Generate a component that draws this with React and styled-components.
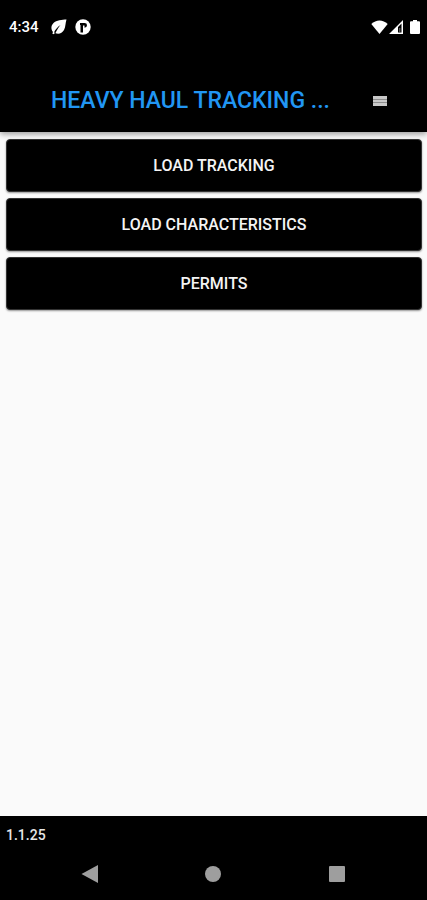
import React from 'react';
import styled, { createGlobalStyle } from 'styled-components';

const GlobalStyle = createGlobalStyle`
  * {
    box-sizing: border-box;
  }

  body {
    margin: 0;
    background: #fafafa;
    font-family: Roboto, sans-serif;
  }
`;

const Screen = styled.div`
  display: flex;
  flex-direction: column;
  min-height: 100vh;
`;

const Header = styled.header`
  background: #000000;
  box-shadow: 0 2px 6px rgba(0, 0, 0, 0.4);
`;

const StatusBar = styled.div`
  display: flex;
  align-items: center;
  justify-content: space-between;
  height: 54px;
  padding: 0 7px 0 9px;
  color: #ffffff;
`;

const StatusGroup = styled.div`
  display: flex;
  align-items: center;
  gap: ${props => props.$gap};
`;

const Clock = styled.time`
  margin-right: 4px;
  font-size: 15px;
  font-weight: 500;
  line-height: 20px;
`;

const Toolbar = styled.div`
  display: flex;
  align-items: center;
  justify-content: space-between;
  height: 78px;
  padding: 16px 36px 0 51px;
`;

const Title = styled.h1`
  margin: 0;
  overflow: hidden;
  color: #2196f3;
  font-size: 23px;
  font-weight: 500;
  line-height: 28px;
  white-space: nowrap;
  text-overflow: ellipsis;
`;

const MenuButton = styled.button`
  display: flex;
  margin: 0;
  padding: 4px;
  border: none;
  background: none;
  color: #c8c8c8;
  cursor: pointer;
`;

const Content = styled.main`
  display: flex;
  flex: 1;
  flex-direction: column;
  gap: 6px;
  padding: 7px 5px 6px 6px;
`;

const ActionButton = styled.button`
  height: 53px;
  border: 1px solid #333333;
  border-radius: 4px;
  background: #000000;
  box-shadow: 0 1px 2px rgba(0, 0, 0, 0.4);
  color: #f4f4f4;
  font-family: inherit;
  font-size: 16px;
  font-weight: 500;
  line-height: 20px;
  cursor: pointer;
`;

const Footer = styled.footer`
  background: #000000;
`;

const Version = styled.div`
  padding: 9px 6px;
  color: #e6e6e6;
  font-size: 14px;
  font-weight: 500;
  line-height: 20px;
`;

const NavBar = styled.nav`
  display: grid;
  grid-template-columns: repeat(3, 1fr);
  height: 46px;
  padding: 0 28px;
`;

const NavButton = styled.button`
  display: flex;
  align-items: flex-start;
  justify-content: center;
  padding: 11px 0 0;
  border: none;
  background: none;
  color: #9e9e9e;
  cursor: pointer;
`;

const LeafIcon = () => (
  <svg width="16" height="16" viewBox="0 0 16 16" aria-hidden="true">
    <path
      d="M15.500 0.500C11 0.700 5.500 1 2.500 4C-0.200 6.800 -0.200 10.500 2 13L1.300 14.500L2.500 15.300L4 14C7.500 15.700 11 14.500 13 11C14.800 7.800 14.300 4 15.500 0.500Z"
      fill="currentColor"
    />
    <path d="M3 13.500C4.300 10.500 6.500 8 9.500 6C7.500 8.500 6 10.500 4.500 14Z" fill="#000000" />
  </svg>
);

const BadgeIcon = () => (
  <svg width="16" height="16" viewBox="0 0 16 16" aria-hidden="true">
    <circle cx="8" cy="8" r="7.700" fill="currentColor" />
    <path
      d="M5 4H9.500Q12 4 12 6.300T9.500 8.700V6.500H8V13.500H5.500V6H5Z"
      fill="#000000"
    />
  </svg>
);

const WifiIcon = () => (
  <svg width="17" height="14" viewBox="0 0 17 14" aria-hidden="true">
    <path d="M0.300 4C5 -0.700 12 -0.700 16.700 4L8.500 14Z" fill="currentColor" />
  </svg>
);

const SignalIcon = () => (
  <svg width="14" height="14" viewBox="0 0 14 14" aria-hidden="true">
    <path
      fillRule="evenodd"
      d="M14 0V14H0ZM12.500 3.600L9 7.100V12.500H12.500Z"
      fill="currentColor"
    />
    <path d="M10.300 8H11.300V12.500H10.300Z" fill="#777777" />
  </svg>
);

const BatteryIcon = () => (
  <svg width="10" height="14" viewBox="0 0 10 14" aria-hidden="true">
    <path
      d="M3 0H7V1.300H9Q10 1.300 10 2.300V13Q10 14 9 14H1Q0 14 0 13V2.300Q0 1.300 1 1.300H3Z"
      fill="currentColor"
    />
  </svg>
);

const MenuIcon = () => (
  <svg width="14" height="12" viewBox="0 0 14 12" aria-hidden="true">
    <rect y="1" width="14" height="10" fill="#8c8c8c" />
    <path d="M0 1H14V4H0ZM0 5H14V7H0ZM0 8H14V11H0Z" fill="currentColor" />
  </svg>
);

const BackIcon = () => (
  <svg width="18" height="18" viewBox="0 0 18 18" aria-hidden="true">
    <path d="M0.500 9L17 0V18Z" fill="currentColor" />
  </svg>
);

const HomeIcon = () => (
  <svg width="18" height="18" viewBox="0 0 18 18" aria-hidden="true">
    <circle cx="9" cy="9" r="8" fill="currentColor" />
  </svg>
);

const RecentsIcon = () => (
  <svg width="18" height="18" viewBox="0 0 18 18" aria-hidden="true">
    <rect x="1" y="1" width="16" height="16" rx="1" fill="currentColor" />
  </svg>
);

const actions = ['LOAD TRACKING', 'LOAD CHARACTERISTICS', 'PERMITS'];

const App = () => {
  return (
    <>
      <GlobalStyle />
      <Screen>
        <Header>
          <StatusBar>
            <StatusGroup $gap="8px">
              <Clock>4:34</Clock>
              <LeafIcon />
              <BadgeIcon />
            </StatusGroup>
            <StatusGroup $gap="7px">
              <StatusGroup $gap="1px">
                <WifiIcon />
                <SignalIcon />
              </StatusGroup>
              <BatteryIcon />
            </StatusGroup>
          </StatusBar>
          <Toolbar>
            <Title>HEAVY HAUL TRACKING ...</Title>
            <MenuButton aria-label="Menu">
              <MenuIcon />
            </MenuButton>
          </Toolbar>
        </Header>
        <Content>
          {actions.map(action => (
            <ActionButton key={action}>{action}</ActionButton>
          ))}
        </Content>
        <Footer>
          <Version>1.1.25</Version>
          <NavBar>
            <NavButton aria-label="Back">
              <BackIcon />
            </NavButton>
            <NavButton aria-label="Home">
              <HomeIcon />
            </NavButton>
            <NavButton aria-label="Recent apps">
              <RecentsIcon />
            </NavButton>
          </NavBar>
        </Footer>
      </Screen>
    </>
  );
};

export default App;
